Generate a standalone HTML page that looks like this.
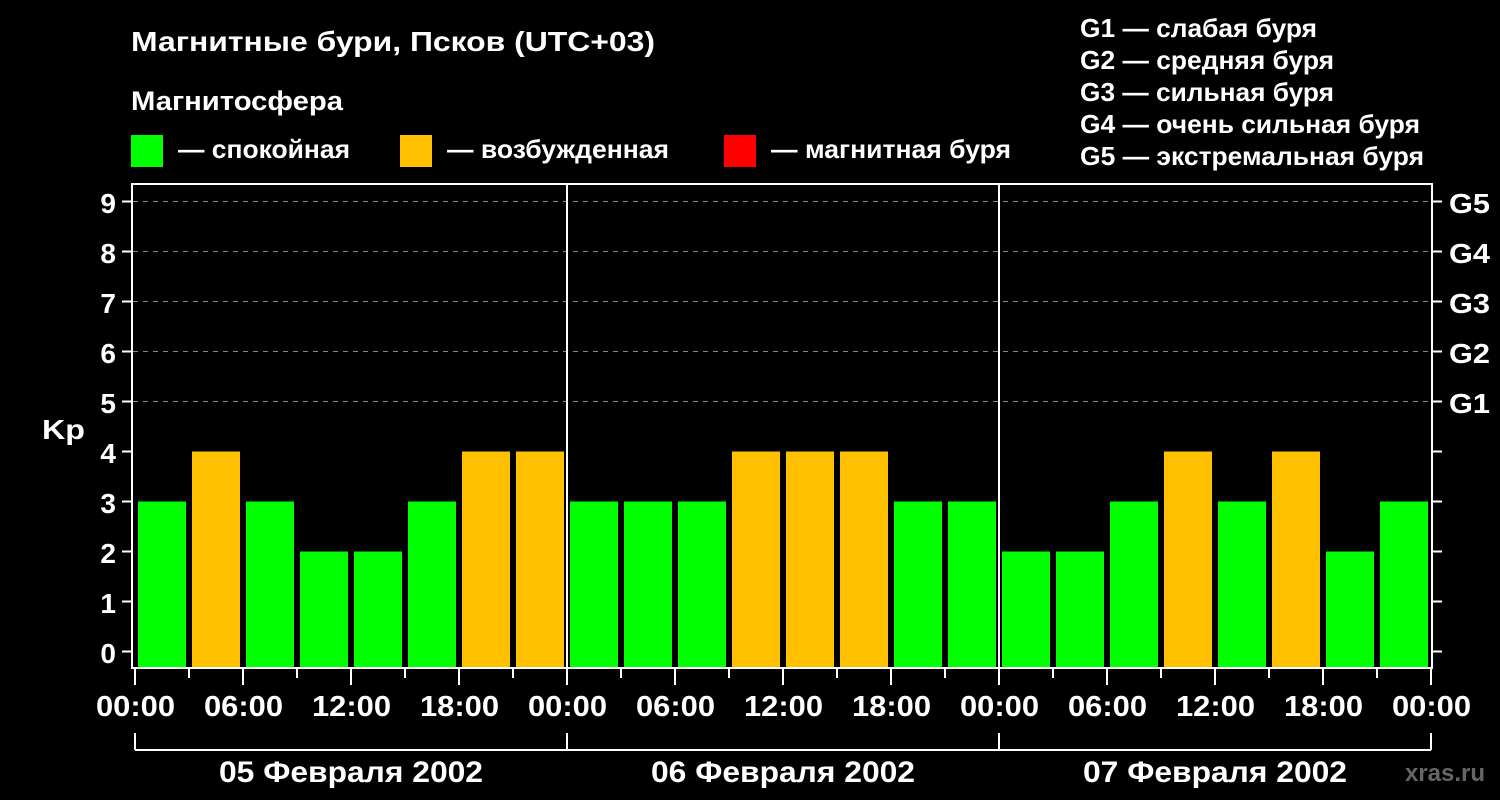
<!DOCTYPE html>
<html><head><meta charset="utf-8"><style>
html,body{margin:0;padding:0;background:#000;}
svg{display:block;}
text{font-family:"Liberation Sans",Arial,sans-serif;font-weight:bold;fill:#fff;}
</style></head><body>
<svg id="s" width="1500" height="800" xmlns="http://www.w3.org/2000/svg">
<rect width="1500" height="800" fill="#000"/>
<text x="131" y="51" font-size="28" textLength="524" lengthAdjust="spacingAndGlyphs">Магнитные бури, Псков (UTC+03)</text>
<text x="131" y="110" font-size="27" textLength="212" lengthAdjust="spacingAndGlyphs">Магнитосфера</text>
<rect x="131" y="135" width="32" height="32" fill="#00ff00"/>
<text x="178" y="158" font-size="26" textLength="172" lengthAdjust="spacingAndGlyphs">— спокойная</text>
<rect x="400" y="135" width="32" height="32" fill="#ffc000"/>
<text x="447" y="158" font-size="26" textLength="222" lengthAdjust="spacingAndGlyphs">— возбужденная</text>
<rect x="724" y="135" width="32" height="32" fill="#ff0000"/>
<text x="771" y="158" font-size="26" textLength="240" lengthAdjust="spacingAndGlyphs">— магнитная буря</text>
<text x="1080" y="37" font-size="26" textLength="237" lengthAdjust="spacingAndGlyphs">G1 — слабая буря</text>
<text x="1080" y="69" font-size="26" textLength="254" lengthAdjust="spacingAndGlyphs">G2 — средняя буря</text>
<text x="1080" y="101" font-size="26" textLength="254" lengthAdjust="spacingAndGlyphs">G3 — сильная буря</text>
<text x="1080" y="133" font-size="26" textLength="340" lengthAdjust="spacingAndGlyphs">G4 — очень сильная буря</text>
<text x="1080" y="165" font-size="26" textLength="344" lengthAdjust="spacingAndGlyphs">G5 — экстремальная буря</text>
<g id="grid" stroke="#888" stroke-width="1" stroke-dasharray="5,5"></g>
<g id="bars"></g>
<g stroke="#fff" stroke-width="2" fill="none">
<rect x="132" y="184" width="1300" height="484"/>
<line x1="567" y1="184" x2="567" y2="668"/>
<line x1="999" y1="184" x2="999" y2="668"/>
<path d="M135 750H1431M135 733V750M567 733V750M999 733V750M1431 733V750"/>
</g>
<g id="ticks" stroke="#fff" stroke-width="2"></g>
<g font-size="28" text-anchor="end">
<text x="116" y="213">9</text><text x="116" y="263">8</text><text x="116" y="313">7</text>
<text x="116" y="363">6</text><text x="116" y="413">5</text><text x="116" y="463">4</text>
<text x="116" y="513">3</text><text x="116" y="563">2</text><text x="116" y="613">1</text>
<text x="116" y="663">0</text>
</g>
<text x="42" y="439" font-size="28" textLength="43" lengthAdjust="spacingAndGlyphs">Kp</text>
<g font-size="28">
<text x="1449" y="213" textLength="41" lengthAdjust="spacingAndGlyphs">G5</text><text x="1449" y="263" textLength="41" lengthAdjust="spacingAndGlyphs">G4</text><text x="1449" y="313" textLength="41" lengthAdjust="spacingAndGlyphs">G3</text>
<text x="1449" y="363" textLength="41" lengthAdjust="spacingAndGlyphs">G2</text><text x="1449" y="413" textLength="41" lengthAdjust="spacingAndGlyphs">G1</text>
</g>
<g font-size="29" id="hrs"></g>
<g font-size="30" text-anchor="middle">
<text x="351" y="782" textLength="264" lengthAdjust="spacingAndGlyphs">05 Февраля 2002</text>
<text x="783" y="782" textLength="264" lengthAdjust="spacingAndGlyphs">06 Февраля 2002</text>
<text x="1215" y="782" textLength="264" lengthAdjust="spacingAndGlyphs">07 Февраля 2002</text>
</g>
<text x="1485" y="781" font-size="24" text-anchor="end" style="fill:#666">xras.ru</text>
<g font-size="29">
<text x="96" y="716" textLength="79" lengthAdjust="spacingAndGlyphs">00:00</text>
<text x="204" y="716" textLength="79" lengthAdjust="spacingAndGlyphs">06:00</text>
<text x="312" y="716" textLength="79" lengthAdjust="spacingAndGlyphs">12:00</text>
<text x="420" y="716" textLength="79" lengthAdjust="spacingAndGlyphs">18:00</text>
<text x="528" y="716" textLength="79" lengthAdjust="spacingAndGlyphs">00:00</text>
<text x="636" y="716" textLength="79" lengthAdjust="spacingAndGlyphs">06:00</text>
<text x="744" y="716" textLength="79" lengthAdjust="spacingAndGlyphs">12:00</text>
<text x="852" y="716" textLength="79" lengthAdjust="spacingAndGlyphs">18:00</text>
<text x="960" y="716" textLength="79" lengthAdjust="spacingAndGlyphs">00:00</text>
<text x="1068" y="716" textLength="79" lengthAdjust="spacingAndGlyphs">06:00</text>
<text x="1176" y="716" textLength="79" lengthAdjust="spacingAndGlyphs">12:00</text>
<text x="1284" y="716" textLength="79" lengthAdjust="spacingAndGlyphs">18:00</text>
<text x="1392" y="716" textLength="79" lengthAdjust="spacingAndGlyphs">00:00</text>
</g>
</svg>
<script>
var NS="http://www.w3.org/2000/svg";
function el(p,t,a){var e=document.createElementNS(NS,t);for(var k in a)e.setAttribute(k,a[k]);p.appendChild(e);}
var v=[3,4,3,2,2,3,4,4,3,3,3,4,4,4,3,3,2,2,3,4,3,4,2,3];
var b=document.getElementById('bars');
v.forEach(function(k,i){var x=135+54*i+3,y=651.5-50*k;el(b,'rect',{x:x,y:y,width:48,height:668-y,fill:k>=4?'#ffc000':'#00ff00'});});
var g=document.getElementById('grid'),t=document.getElementById('ticks');
for(var k=0;k<=9;k++){var y=651.5-50*k;if(k>=5)el(g,'line',{x1:133,y1:y,x2:1431,y2:y});
el(t,'line',{x1:122,y1:y,x2:132,y2:y});el(t,'line',{x1:1432,y1:y,x2:1442,y2:y});}
for(var i=0;i<=24;i++){var x=135+54*i;el(t,'line',{x1:x,y1:668,x2:x,y2:i%2?678:685});}
</script>
</body></html>
